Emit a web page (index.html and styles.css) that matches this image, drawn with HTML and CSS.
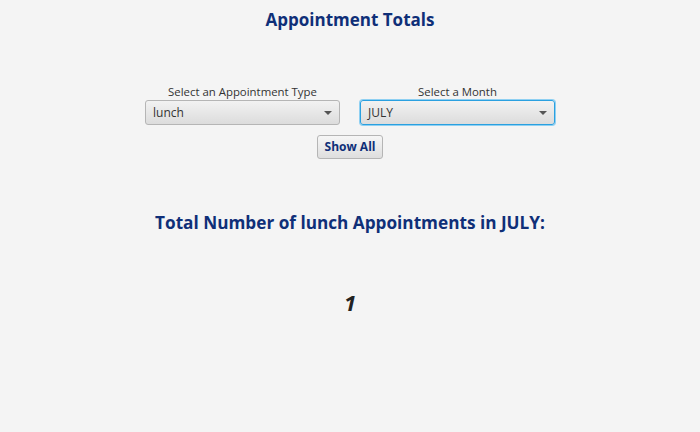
FILE: index.html
```html
<!DOCTYPE html>
<html>
<head>
<meta charset="utf-8">
<link rel="stylesheet" href="styles.css">
</head>
<body>
<div class="page">
  <h1 class="title">Appointment Totals</h1>
  <div class="selectors">
    <div class="field">
      <div class="label">Select an Appointment Type</div>
      <div class="combo">
        <span class="combo-text">lunch</span>
        <span class="arrow"></span>
      </div>
    </div>
    <div class="field">
      <div class="label">Select a Month</div>
      <div class="combo focused">
        <span class="combo-text">JULY</span>
        <span class="arrow"></span>
      </div>
    </div>
  </div>
  <div class="actions">
    <button class="btn">Show All</button>
  </div>
  <h2 class="result-title">Total Number of lunch Appointments in JULY:</h2>
  <div class="count">1</div>
</div>
</body>
</html>
```
FILE: styles.css
```css
html, body {
  margin: 0;
  padding: 0;
  background: #f4f4f4;
}
body {
  width: 700px;
  height: 432px;
  overflow: hidden;
  font-family: "Open Sans", "Noto Sans", sans-serif;
}
.page {
  display: flex;
  flex-direction: column;
  align-items: center;
}
.title {
  margin: 8px 0 0 0;
  font-size: 17px;
  font-weight: 700;
  color: #0f2f78;
  line-height: 24px;
}
.selectors {
  display: flex;
  gap: 20px;
  margin-top: 53px;
}
.field {
  display: flex;
  flex-direction: column;
  align-items: center;
}
.label {
  font-size: 11.4px;
  color: #333;
  line-height: 14px;
  margin-bottom: 1px;
}
.combo {
  box-sizing: border-box;
  width: 195px;
  height: 25px;
  border: 1px solid #b5b5b5;
  border-radius: 3px;
  background: linear-gradient(#f2f2f2, #dcdcdc);
  display: flex;
  align-items: center;
  justify-content: space-between;
  padding: 0 7px 0 7px;
}
.combo.focused {
  border: 1px solid #2aa0e0;
  box-shadow: 0 0 0 1px #8fd0f2;
}
.combo-text {
  font-size: 12px;
  color: #333;
}
.arrow {
  width: 0;
  height: 0;
  border-left: 4px solid transparent;
  border-right: 4px solid transparent;
  border-top: 4px solid #555;
}
.actions {
  margin-top: 9px;
}
.btn {
  box-sizing: border-box;
  height: 24px;
  padding: 0 7px;
  border: 1px solid #b5b5b5;
  border-radius: 3px;
  background: linear-gradient(#f6f6f6, #dedede);
  font-family: "Open Sans", "Noto Sans", sans-serif;
  font-size: 12px;
  font-weight: 700;
  color: #0f2f78;
}
.result-title {
  margin: 52px 0 0 0;
  font-size: 17.2px;
  font-weight: 700;
  color: #0f2f78;
  line-height: 24px;
}
.count {
  margin-top: 54px;
  font-size: 22px;
  font-weight: 700;
  font-style: italic;
  color: #222;
  line-height: 26px;
}
```
